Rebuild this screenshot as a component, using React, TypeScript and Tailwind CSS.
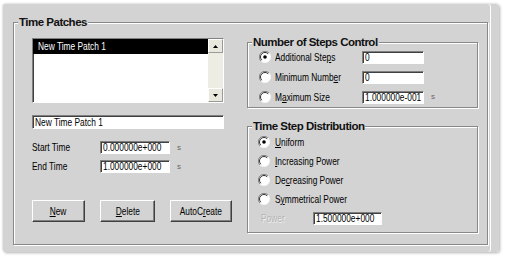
import type { ReactNode } from 'react';

const font = "font-['Liberation_Sans',Arial,sans-serif]";

const sunken =
  'border border-t-[#808080] border-l-[#808080] border-r-white border-b-white shadow-[inset_1px_1px_0_#404040]';
const raised =
  'border border-t-white border-l-white border-r-[#404040] border-b-[#404040] shadow-[inset_-1px_-1px_0_#808080]';

// the dialog text is narrow (scaled screenshot), so squeeze each run of text
function T({ children, className = 'origin-left' }: { children: ReactNode; className?: string }) {
  return <span className={`inline-block scale-x-[0.76] whitespace-nowrap ${className}`}>{children}</span>;
}

function Radio({ checked = false }: { checked?: boolean }) {
  return (
    <svg width="12" height="12" viewBox="0 0 12 12" className="shrink-0">
      <circle cx="6" cy="6" r="5.5" fill="#fff" />
      <path d="M10 2 A5.6 5.6 0 0 0 2 10" stroke="#808080" fill="none" />
      <path d="M9.2 2.8 A4.5 4.5 0 0 0 2.8 9.2" stroke="#303030" fill="none" />
      <path d="M2 10 A5.6 5.6 0 0 0 10 2" stroke="#f4f4f4" fill="none" />
      {checked && <circle cx="6" cy="6" r="1.8" fill="#000" />}
    </svg>
  );
}

function Field({ value, className = '' }: { value: string; className?: string }) {
  return (
    <div className={`h-[13px] shrink-0 overflow-hidden bg-white pl-[2px] text-[11px] leading-[11px] text-black ${sunken} ${className}`}>
      <T>{value}</T>
    </div>
  );
}

function Unit() {
  return <span className="ml-[7px] text-[8px] leading-none text-[#666]">s</span>;
}

function Group({ title, className = '', children }: { title: string; className?: string; children?: ReactNode }) {
  return (
    <div className={`border border-[#888] shadow-[inset_1px_1px_0_#fff,1px_1px_0_#fff] ${className}`}>
      <div className="-mt-[8px] ml-[4px] w-fit bg-[#d3d3d3] px-[1px] text-[11.5px] font-bold leading-[14px] tracking-[-0.5px] whitespace-nowrap text-[#111]">
        {title}
      </div>
      {children}
    </div>
  );
}

function Button({ children, className = '' }: { children: ReactNode; className?: string }) {
  return (
    <button
      type="button"
      className={`flex h-[22px] items-center justify-center bg-[#d3d3d3] text-[11px] text-black ${raised} ${className}`}
    >
      <T className="origin-center">{children}</T>
    </button>
  );
}

function ScrollArrow({ down = false }: { down?: boolean }) {
  return (
    <div className="flex h-[14px] items-center justify-center border border-t-white border-l-white border-r-[#9a9a9a] border-b-[#9a9a9a] bg-[#e9e8dc]">
      <svg width="5" height="3" viewBox="0 0 5 3">
        <polygon points={down ? '0,0 5,0 2.5,3' : '0,3 5,3 2.5,0'} fill="#000" />
      </svg>
    </div>
  );
}

const stepOptions = [
  { label: <>Additional Ste<u>p</u>s</>, value: '0', checked: true },
  { label: <>Minimum Numb<u>e</u>r</>, value: '0' },
  { label: <>M<u>a</u>ximum Size</>, value: '1.000000e-001', unit: true },
];

const distributions = [
  { label: <><u>U</u>niform</>, checked: true },
  { label: <><u>I</u>ncreasing Power</> },
  { label: <>De<u>c</u>reasing Power</> },
  { label: <>S<u>y</u>mmetrical Power</> },
];

export default function App() {
  return (
    <div className={`h-[257px] w-[507px] overflow-hidden bg-white ${font}`}>
      <div className="ml-[3px] mt-[4px] h-[248px] w-[496px] rounded-[3px] bg-[#d3d3d3] pl-[10px] pt-[18px] shadow-[inset_-8px_0_0_#d3d3d3,inset_-9px_0_0_#fff,1px_1px_3px_rgba(0,0,0,0.3),-1px_-1px_2px_rgba(0,0,0,0.08)]">
        <Group title="Time Patches" className="h-[223px] w-[475px]">
          <div className="mt-[9px] flex pl-[18px]">
            {/* left column */}
            <div className="flex w-[200px] flex-col">
              <div className={`flex h-[65px] w-[192px] bg-white ${sunken}`}>
                <div className="flex-1">
                  <div className="h-[15px] bg-black pl-[5px] text-[11px] leading-[15px] text-white">
                    <T>New Time Patch 1</T>
                  </div>
                </div>
                <div className="flex w-[15px] flex-col bg-[#eeede3]">
                  <ScrollArrow />
                  <div className="flex-1" />
                  <ScrollArrow down />
                </div>
              </div>

              <Field value="New Time Patch 1" className="mt-[12px] h-[14px] w-[192px] leading-[12px]" />

              <div className="mt-[12px] flex h-[13px] items-center">
                <span className="w-[68px] text-[11px] text-black"><T>Start Time</T></span>
                <Field value="0.000000e+000" className="w-[70px]" />
                <Unit />
              </div>
              <div className="mt-[6px] flex h-[13px] items-center">
                <span className="w-[68px] text-[11px] text-black"><T>End Time</T></span>
                <Field value="1.000000e+000" className="w-[70px]" />
                <Unit />
              </div>

              <div className="mt-[27px] flex">
                <Button className="w-[53px]">
                  <u>N</u>ew
                </Button>
                <Button className="ml-[15px] w-[55px]">
                  <u>D</u>elete
                </Button>
                <Button className="ml-[15px] w-[62px]">
                  AutoC<u>r</u>eate
                </Button>
              </div>
            </div>

            {/* right column */}
            <div className="ml-[15px] flex w-[231px] flex-col">
              <Group title="Number of Steps Control" className="mt-[4px] h-[66px]">
                <div className="flex flex-col gap-[4px] pl-[11px]">
                  {stepOptions.map((opt, i) => (
                    <div key={i} className="flex h-[16px] items-center">
                      <Radio checked={opt.checked} />
                      <span className="ml-[4px] w-[87px] text-[11px] text-black"><T>{opt.label}</T></span>
                      <Field value={opt.value} className="w-[62px]" />
                      {opt.unit && <Unit />}
                    </div>
                  ))}
                </div>
              </Group>

              <Group title="Time Step Distribution" className="mt-[18px] h-[107px]">
                <div className="mt-[1px] flex flex-col gap-[3px] pl-[10px]">
                  {distributions.map((opt, i) => (
                    <div key={i} className="flex h-[16px] items-center">
                      <Radio checked={opt.checked} />
                      <span className="ml-[5px] text-[11px] text-black"><T>{opt.label}</T></span>
                    </div>
                  ))}
                  <div className="flex h-[16px] items-center">
                    <span className="ml-[3px] w-[52px] text-[11px] text-[#b4b4b4] [text-shadow:1px_1px_0_#f2f2f2]">
                      <T>Power</T>
                    </span>
                    <Field value="1.500000e+000" className="w-[69px]" />
                  </div>
                </div>
              </Group>
            </div>
          </div>
        </Group>
      </div>
    </div>
  );
}
